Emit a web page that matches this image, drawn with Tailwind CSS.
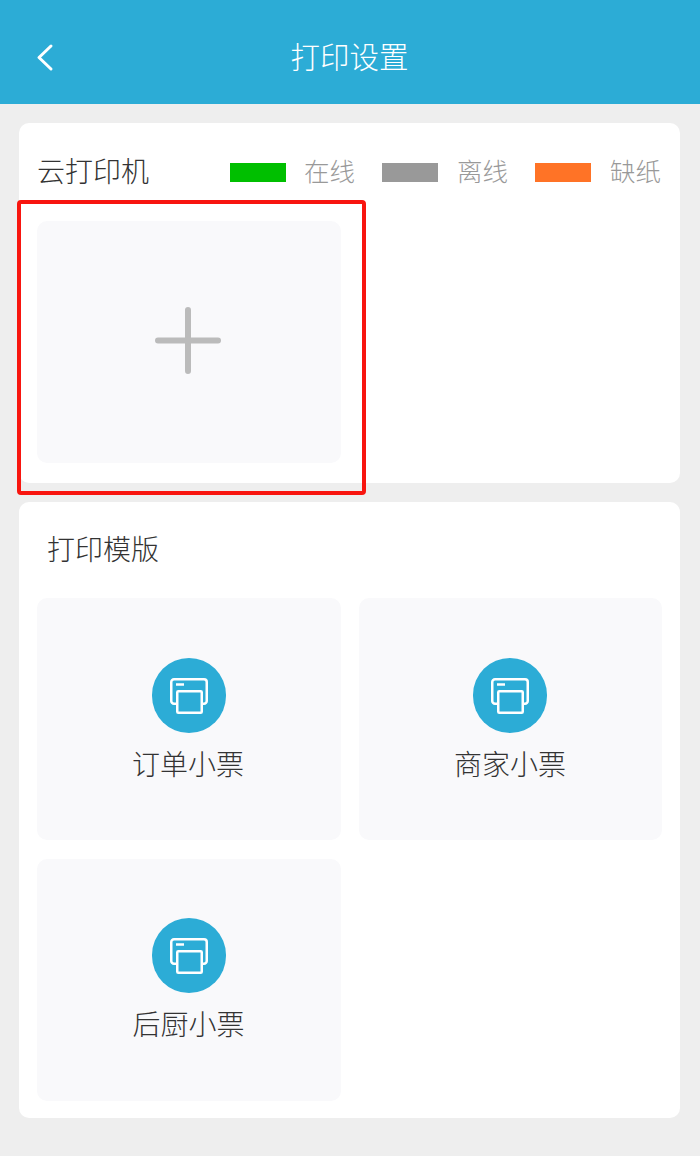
<!DOCTYPE html>
<html lang="zh-CN">
<head>
    <meta charset="UTF-8">
    <meta name="viewport" content="width=device-width, initial-scale=1.0">
    <title>打印设置</title>
    <script src="https://cdn.jsdelivr.net/npm/@tailwindcss/browser@4"></script>
</head>
<body class="bg-[#eeeeee] font-['Noto_Sans_CJK_SC','Noto_Sans',sans-serif] font-light">
    <div class="relative w-[700px] h-[1156px] overflow-hidden">
        <!-- header -->
        <header class="relative h-[104px] bg-[#2cacd6] flex items-center justify-center text-white text-[29.5px] pt-[6px] pr-[1px]">
            <svg class="absolute left-[36px] top-[43px]" width="18" height="29" viewBox="0 0 18 29" fill="none" stroke="white" stroke-width="3" stroke-linecap="round" stroke-linejoin="round"><path d="M15 3 L3 14.5 L15 26"/></svg>
            <span>打印设置</span>
        </header>

        <main class="px-[19px] pr-[20px] pt-[19px] flex flex-col gap-[19px]">
            <!-- printers -->
            <section class="bg-white rounded-[10px] h-[360px] pl-[18px] pr-[19px]">
                <div class="flex items-center h-[98px] pb-[4px]">
                    <h2 class="text-[28px] text-[#333333] font-light mr-auto leading-none">云打印机</h2>
                    <div class="flex items-center text-[25.5px] text-[#999999] leading-none">
                        <span class="mt-[4px] w-[56px] h-[19px] bg-[#00bf00]"></span>
                        <span class="ml-[18px] w-[51px]">在线</span>
                        <span class="mt-[4px] ml-[27px] w-[56px] h-[19px] bg-[#999999]"></span>
                        <span class="ml-[19px] w-[51px]">离线</span>
                        <span class="mt-[4px] ml-[27px] w-[56px] h-[19px] bg-[#ff7326]"></span>
                        <span class="ml-[19px] w-[51px]">缺纸</span>
                    </div>
                </div>
                <div class="w-[304px] h-[242px] bg-[#f9f9fb] rounded-[10px] flex items-center justify-center">
                    <svg class="mb-[4px] mr-[2px]" width="66" height="67" viewBox="0 0 66 67" fill="none" stroke="#bbbbbb" stroke-width="6" stroke-linecap="round"><path d="M33 3 V64 M3 33.5 H63"/></svg>
                </div>
            </section>

            <!-- templates -->
            <section class="bg-white rounded-[10px] h-[616px] pl-[18px] pr-[18px]">
                <h2 class="text-[28px] text-[#333333] font-light leading-none h-[96px] pl-[10px] flex items-center pb-[5px]">打印模版</h2>
                <div class="grid grid-cols-[304px_303px] gap-x-[18px] gap-y-[19px]">
                    <div class="h-[242px] bg-[#f9f9fb] rounded-[10px] flex flex-col items-center pt-[60px]">
                        <div class="w-[74px] h-[75px] rounded-full bg-[#2cacd6] flex items-center justify-center">
                            <svg width="38" height="36" viewBox="0 0 38 36" fill="none" stroke="white" stroke-width="2.5" stroke-linejoin="round"><path d="M7 25.75 H4 a2.75 2.75 0 0 1 -2.75 -2.75 V4 a2.75 2.75 0 0 1 2.75 -2.75 H34 a2.75 2.75 0 0 1 2.75 2.75 V23 a2.75 2.75 0 0 1 -2.75 2.75 H32"/><rect x="7.25" y="13.25" width="24.5" height="21.5" rx="1"/><path d="M6 6.5 H14"/></svg>
                        </div>
                        <span class="mt-[11px] -ml-[2px] text-[28px] text-[#333333] leading-[38px]">订单小票</span>
                    </div>
                    <div class="h-[242px] bg-[#f9f9fb] rounded-[10px] flex flex-col items-center pt-[60px] pr-[2px]">
                        <div class="w-[74px] h-[75px] rounded-full bg-[#2cacd6] flex items-center justify-center">
                            <svg width="38" height="36" viewBox="0 0 38 36" fill="none" stroke="white" stroke-width="2.5" stroke-linejoin="round"><path d="M7 25.75 H4 a2.75 2.75 0 0 1 -2.75 -2.75 V4 a2.75 2.75 0 0 1 2.75 -2.75 H34 a2.75 2.75 0 0 1 2.75 2.75 V23 a2.75 2.75 0 0 1 -2.75 2.75 H32"/><rect x="7.25" y="13.25" width="24.5" height="21.5" rx="1"/><path d="M6 6.5 H14"/></svg>
                        </div>
                        <span class="mt-[11px] ml-[1px] text-[28px] text-[#333333] leading-[38px]">商家小票</span>
                    </div>
                    <div class="h-[242px] bg-[#f9f9fb] rounded-[10px] flex flex-col items-center pt-[59px]">
                        <div class="w-[74px] h-[75px] rounded-full bg-[#2cacd6] flex items-center justify-center">
                            <svg width="38" height="36" viewBox="0 0 38 36" fill="none" stroke="white" stroke-width="2.5" stroke-linejoin="round"><path d="M7 25.75 H4 a2.75 2.75 0 0 1 -2.75 -2.75 V4 a2.75 2.75 0 0 1 2.75 -2.75 H34 a2.75 2.75 0 0 1 2.75 2.75 V23 a2.75 2.75 0 0 1 -2.75 2.75 H32"/><rect x="7.25" y="13.25" width="24.5" height="21.5" rx="1"/><path d="M6 6.5 H14"/></svg>
                        </div>
                        <span class="mt-[11px] -ml-[1px] text-[28px] text-[#333333] leading-[38px]">后厨小票</span>
                    </div>
                </div>
            </section>
        </main>

        <!-- red annotation over the add tile -->
        <div class="absolute left-[17px] top-[200px] w-[349px] h-[295px] border-[4px] border-[#f8150f] rounded-[4px]"></div>
    </div>
</body>
</html>
